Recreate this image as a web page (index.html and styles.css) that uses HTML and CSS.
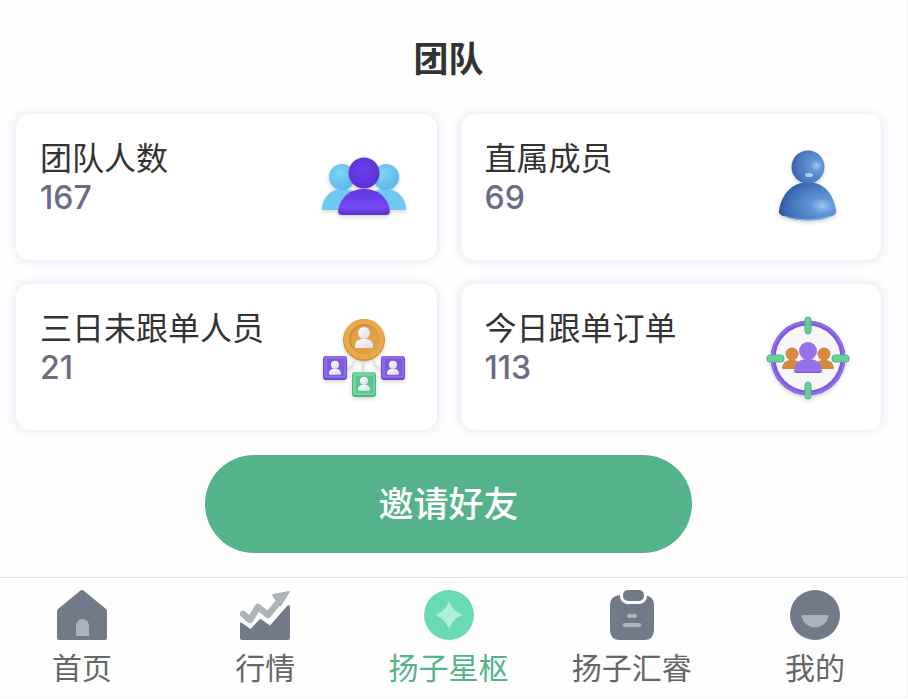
FILE: index.html
```html
<!DOCTYPE html>
<html lang="zh-CN">
<head>
    <meta charset="UTF-8">
    <meta name="viewport" content="width=device-width, initial-scale=1.0">
    <title>团队</title>
    <link rel="stylesheet" href="styles.css">
</head>
<body>
    <main class="page">
        <h1 class="title">团队</h1>

        <section class="cards">
            <div class="card">
                <div class="info">
                    <h2>团队人数</h2>
                    <p>167</p>
                </div>
                <svg class="pic" viewBox="0 0 100 100" aria-hidden="true">
                    <defs>
                        <radialGradient id="sky" cx="0.4" cy="0.35" r="0.7">
                            <stop offset="0" stop-color="#7fd4f8"/>
                            <stop offset="1" stop-color="#5bb5e6"/>
                        </radialGradient>
                        <radialGradient id="violet" cx="0.45" cy="0.4" r="0.65">
                            <stop offset="0" stop-color="#6b3fee"/>
                            <stop offset="1" stop-color="#5a2fd0"/>
                        </radialGradient>
                        <linearGradient id="violetBody" x1="0" y1="0" x2="0" y2="1">
                            <stop offset="0" stop-color="#6236e0"/>
                            <stop offset="0.7" stop-color="#7647f8"/>
                            <stop offset="1" stop-color="#5a30c8"/>
                        </linearGradient>
                    </defs>
                    <path fill="#70c9f2" d="M8 68c2-11 9-18 21-18s19 7 21 18q0 3-3 3H10q-3 0-2-3zM50 68c2-11 9-18 21-18s19 7 21 18q1 3-2 3H53q-3 0-3-3z"/>
                    <circle cx="28" cy="38" r="13" fill="url(#sky)"/>
                    <circle cx="72" cy="38" r="13" fill="url(#sky)"/>
                    <path fill="url(#violetBody)" d="M24 72c2-14 12-22 26-22s24 8 26 22q0 4-4 4H28q-4 0-4-4z"/>
                    <circle cx="50" cy="34" r="15.500" fill="url(#violet)"/>
                </svg>
            </div>

            <div class="card">
                <div class="info">
                    <h2>直属成员</h2>
                    <p>69</p>
                </div>
                <svg class="pic" viewBox="0 0 100 100" aria-hidden="true">
                    <defs>
                        <radialGradient id="blueHead" cx="0.76" cy="0.46" r="0.85">
                            <stop offset="0" stop-color="#a5cdf2"/>
                            <stop offset="0.2" stop-color="#6296d6"/>
                            <stop offset="0.7" stop-color="#4675bd"/>
                            <stop offset="1" stop-color="#2f5299"/>
                        </radialGradient>
                        <radialGradient id="blueBody" cx="0.76" cy="0.62" r="0.85">
                            <stop offset="0" stop-color="#9bc6ef"/>
                            <stop offset="0.25" stop-color="#5f95d5"/>
                            <stop offset="0.7" stop-color="#3f70b9"/>
                            <stop offset="1" stop-color="#284890"/>
                        </radialGradient>
                    </defs>
                    <path fill="url(#blueBody)" d="M21 72c2-15 12-29 29-29s26 14 28 28q1 4-4 6c-13 6-34 6-49 0q-5-2-4-5z"/>
                    <path fill="none" stroke="#8bbbed" stroke-width="1" d="M26 77c14 5 33 5 47 0"/>
                    <circle cx="50" cy="28" r="16.500" fill="url(#blueHead)"/>
                    <ellipse cx="51" cy="36" rx="4" ry="2" fill="#a9d0f4"/>
                </svg>
            </div>

            <div class="card">
                <div class="info">
                    <h2>三日未跟单人员</h2>
                    <p>21</p>
                </div>
                <svg class="pic" viewBox="0 0 100 100" aria-hidden="true">
                    <defs>
                        <linearGradient id="person" x1="0" y1="0" x2="1" y2="1">
                            <stop offset="0" stop-color="#ffffff"/>
                            <stop offset="1" stop-color="#dcd8ee"/>
                        </linearGradient>
                        <g id="user">
                            <circle cx="0" cy="-5" r="6"/>
                            <path d="M-9 9c0-6 3-8 9-8s9 2 9 8q0 1-1 1H-8q-1 0-1-1z"/>
                        </g>
                    </defs>
                    <path fill="none" stroke="#dedced" stroke-width="2" d="M32 60q7 0 8-8M49 52v14M68 60q-8 0-8-8"/>
                    <circle cx="50" cy="31" r="21" fill="#d9943a"/>
                    <circle cx="50" cy="30" r="20" fill="#e7aa4d"/>
                    <circle cx="50" cy="30" r="15" fill="#d18f3b"/>
                    <circle cx="51" cy="31" r="14" fill="#e0a047"/>
                    <use href="#user" fill="url(#person)" transform="translate(50 29)"/>
                    <g>
                        <rect x="9" y="47" width="24" height="24" rx="3" fill="#7048dc"/>
                        <rect x="10" y="47" width="22" height="22" rx="2" fill="#8f69ee"/>
                        <rect x="13" y="50" width="17" height="17" fill="#7f5bda"/>
                        <use href="#user" fill="url(#person)" transform="translate(21 59) scale(0.67)"/>
                        <rect x="67" y="47" width="24" height="24" rx="3" fill="#7048dc"/>
                        <rect x="68" y="47" width="22" height="22" rx="2" fill="#8f69ee"/>
                        <rect x="71" y="50" width="17" height="17" fill="#7f5bda"/>
                        <use href="#user" fill="url(#person)" transform="translate(79 59) scale(0.67)"/>
                        <rect x="38" y="63" width="24" height="25" rx="3" fill="#4bb77e"/>
                        <rect x="39" y="63" width="22" height="23" rx="2" fill="#70d69e"/>
                        <rect x="42" y="67" width="17" height="17" fill="#5ac48c"/>
                        <use href="#user" fill="url(#person)" transform="translate(50 75) scale(0.67)"/>
                    </g>
                </svg>
            </div>

            <div class="card">
                <div class="info">
                    <h2>今日跟单订单</h2>
                    <p>113</p>
                </div>
                <svg class="pic" viewBox="0 0 100 100" aria-hidden="true">
                    <circle cx="50" cy="49" r="33" fill="#f8f7fb" stroke="#e7e4f0" stroke-width="2"/>
                    <circle cx="50" cy="49" r="35" fill="none" stroke="#8058df" stroke-width="5"/>
                    <circle cx="50" cy="49" r="36" fill="none" stroke="#9470ec" stroke-width="2"/>
                    <g fill="#69cf98" stroke="#4fb681" stroke-width="1">
                        <rect x="47" y="8" width="6" height="17" rx="3"/>
                        <rect x="47" y="73" width="6" height="17" rx="3"/>
                        <rect x="9" y="46" width="17" height="7" rx="3"/>
                        <rect x="74" y="46" width="17" height="7" rx="3"/>
                    </g>
                    <g fill="#d7893d">
                        <circle cx="34" cy="45" r="6.500"/>
                        <circle cx="66" cy="45" r="6.500"/>
                        <path d="M24 59c1-6 4-8 10-8s9 2 9 9H25q-1 0-1-1zM57 60c0-7 3-9 9-9s9 2 10 8q0 1-1 1z"/>
                    </g>
                    <g fill="#9871e8">
                        <circle cx="50" cy="42" r="9"/>
                        <path d="M36 62c1-9 6-12 14-12s13 3 14 12q0 2-2 2H38q-2 0-2-2z"/>
                    </g>
                    <path stroke="#7951cc" stroke-width="1" d="M38 63.500h24"/>
                </svg>
            </div>
        </section>

        <button type="button" class="btn">邀请好友</button>
    </main>

    <nav class="tabbar">
        <a href="#home" class="tab">
            <svg viewBox="0 0 50 50" aria-hidden="true">
                <path fill="#727989" d="M23.500.600q1.500-1.200 3 0L49 19q1 1 1 2v27q0 2-2 2H2q-2 0-2-2V21q0-1 1-2z"/>
                <path fill="#adb2bb" d="M19 46V35.500a6.500 6.500 0 0 1 13 0V46z"/>
            </svg>
            <span>首页</span>
        </a>
        <a href="#market" class="tab">
            <svg viewBox="0 0 50 50" aria-hidden="true">
                <path fill="#727989" d="M0 34q0-3 2-1l8.500 6L19.500 29.500q1-1 2 0L30 35.500 47 16q3-2 3 1v31q0 2-2 2H2q-2 0-2-2z"/>
                <path fill="none" stroke="#adb2bb" stroke-width="6.500" stroke-linecap="round" stroke-linejoin="round" d="M3 24l7 6L18 17l10 8L41 9"/>
                <path fill="#adb2bb" d="M33 4l16-3q1 0 1 1l-9 14q-1 1-1.500 0l-7-10q-1-1 .500-2z"/>
            </svg>
            <span>行情</span>
        </a>
        <a href="#hub" class="tab active">
            <svg viewBox="0 0 50 50" aria-hidden="true">
                <circle cx="25" cy="25" r="25" fill="#69dab2"/>
                <path fill="#b0eedc" d="M24 13q1-2 2 0 3 8 11 11 2 1 0 2-8 3-11 11-1 2-2 0-3-8-11-11-2-1 0-2 8-3 11-11z"/>
            </svg>
            <span>扬子星枢</span>
        </a>
        <a href="#orders" class="tab">
            <svg viewBox="0 0 50 50" aria-hidden="true">
                <path fill="#727989" d="M13 5h24q10 1 10 10v25q0 10-10 10H13Q3 50 3 40V15Q3 6 13 5z"/>
                <rect x="13" y="-3" width="27" height="17" rx="8" fill="#fefefe"/>
                <rect x="16" y="0" width="21" height="11" rx="5" fill="#727989"/>
                <path stroke="#adb2bb" stroke-width="4" stroke-linecap="round" d="M22 26h6M17.500 35h15"/>
            </svg>
            <span>扬子汇睿</span>
        </a>
        <a href="#mine" class="tab">
            <svg viewBox="0 0 50 50" aria-hidden="true">
                <circle cx="25" cy="25" r="25" fill="#727989"/>
                <path fill="#adb2bb" d="M12 25h26q1 0 .500 2a14 14 0 0 1-27 0q-.500-2 .500-2z"/>
            </svg>
            <span>我的</span>
        </a>
    </nav>
</body>
</html>
```
FILE: styles.css
```css
* {
    box-sizing: border-box;
}
body {
    font-family: Inter, "Noto Sans CJK SC", sans-serif;
    margin: 0;
    background-color: #fefefe;
    color: #333;
    border-right: 1px solid #f4f3f7;
}
.page {
    padding: 34px 26px 24px 16px;
}
.title {
    margin: 0 0 30px;
    font-size: 35px;
    line-height: 50px;
    font-weight: 700;
    text-align: center;
}
.cards {
    display: grid;
    grid-template-columns: 1fr 1fr;
    gap: 24px;
}
.card {
    display: flex;
    justify-content: space-between;
    height: 146px;
    padding: 25px 23px 21px 24px;
    border-radius: 14px;
    background-color: #fff;
    box-shadow: 0 0 12px rgba(90, 70, 200, 0.16);
}
.info h2 {
    margin: 0;
    font-size: 32px;
    line-height: 40px;
    font-weight: 400;
}
.info p {
    margin: 0;
    font-size: 32px;
    line-height: 38px;
    font-weight: 500;
    color: #6b6b87;
}
.pic {
    width: 100px;
    height: 100px;
    filter: drop-shadow(0 2px 2px rgba(0, 0, 0, 0.16));
}
.btn {
    display: block;
    width: 487px;
    max-width: 100%;
    margin: 25px auto 0;
    padding: 24px 0;
    border: none;
    border-radius: 50px;
    background-color: #55b38b;
    color: #fff;
    font-family: inherit;
    font-size: 35px;
    font-weight: 500;
    line-height: 50px;
    cursor: pointer;
}
.tabbar {
    display: flex;
    justify-content: space-between;
    padding: 12px 32px 9px 22px;
    border-top: 1px solid #e6e6e8;
    border-bottom: 1px solid #f4f4f6;
}
.tab {
    display: flex;
    flex-direction: column;
    align-items: center;
    width: 120px;
    color: #666;
    font-size: 30px;
    line-height: 40px;
    text-decoration: none;
    white-space: nowrap;
}
.tab svg {
    width: 50px;
    height: 50px;
    margin-bottom: 8px;
}
.tab.active {
    color: #55b38b;
}
```
